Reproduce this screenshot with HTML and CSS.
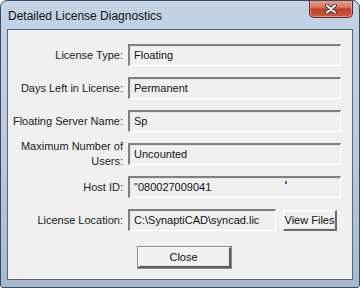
FILE: index.html
```html
<!DOCTYPE html>
<html lang="en">
<head>
    <meta charset="UTF-8">
    <title>Detailed License Diagnostics</title>
    <link rel="stylesheet" href="styles.css">
</head>
<body>

<div class="window">
    <div class="titlebar">
        <span class="title">Detailed License Diagnostics</span>
        <div class="close-x">
            <svg width="16" height="10" viewBox="0 0 16 10">
                <path d="M4 1.5 L12 8.5 M12 1.5 L4 8.5" stroke="#3a3a3a" stroke-width="4" stroke-linecap="round"/>
                <path d="M4 1.5 L12 8.5 M12 1.5 L4 8.5" stroke="#ffffff" stroke-width="2" stroke-linecap="round"/>
            </svg>
        </div>
    </div>

    <div class="client">
        <div class="form">
            <label class="label">License Type:</label>
            <div class="field">Floating</div>

            <label class="label">Days Left in License:</label>
            <div class="field">Permanent</div>

            <label class="label">Floating Server Name:</label>
            <div class="field">Sp</div>

            <label class="label two-line">Maximum Number of<br>Users:</label>
            <div class="field">Uncounted</div>

            <label class="label">Host ID:</label>
            <div class="field host">"080027009041<span class="mark"></span></div>

            <label class="label">License Location:</label>
            <div class="location">
                <div class="field">C:\SynaptiCAD\syncad.lic</div>
                <button class="btn view-btn">View Files</button>
            </div>
        </div>

        <div class="footer">
            <button class="btn close-btn">Close</button>
        </div>
    </div>
</div>

</body>
</html>
```

FILE: styles.css
```css
body {
    margin: 0;
    padding: 0;
    background-color: #ffffff;
    font-family: "Liberation Sans", Arial, sans-serif;
}

.window {
    width: 360px;
    height: 288px;
    box-sizing: border-box;
    border: 1px solid #3d4a5a;
    border-radius: 7px 7px 3px 3px;
    background: linear-gradient(to bottom, #c2d3e5 0%, #b6c8db 60%, #a4b9d0 100%);
    display: flex;
    flex-direction: column;
    overflow: hidden;
}

.titlebar {
    height: 28px;
    display: flex;
    align-items: flex-start;
    justify-content: space-between;
}

.title {
    font-size: 12px;
    color: #111;
    margin: 8px 0 0 7px;
}

.close-x {
    width: 44px;
    height: 18px;
    margin-right: 6px;
    margin-top: -1px;
    box-sizing: border-box;
    border: 1px solid #5b2a22;
    border-top: none;
    border-radius: 0 0 5px 5px;
    background: linear-gradient(to bottom, #e5a896 0%, #d97a60 40%, #c0412a 55%, #d0593f 100%);
    display: flex;
    align-items: center;
    justify-content: center;
    box-shadow: inset 0 0 0 1px rgba(255, 200, 180, 0.5);
}

.client {
    flex: 1;
    margin: 0 6px 7px 6px;
    border: 1px solid #54657a;
    background-color: #f0f0f0;
    display: flex;
    flex-direction: column;
}

.form {
    display: grid;
    grid-template-columns: 115px 1fr;
    grid-auto-rows: 22px;
    column-gap: 5px;
    row-gap: 11px;
    padding: 14px 11px 0 0;
    align-items: center;
}

.label {
    font-size: 11px;
    color: #1a1a1a;
    text-align: right;
    white-space: nowrap;
}

.two-line {
    line-height: 15px;
}

.field {
    height: 22px;
    box-sizing: border-box;
    border-top: 2px solid #7f7f7f;
    border-left: 2px solid #7f7f7f;
    border-right: 1px solid #ffffff;
    border-bottom: 1px solid #ffffff;
    box-shadow: 1px 1px 0 #e6e6e6 inset;
    padding: 3px 0 0 4px;
    font-size: 11px;
    color: #111;
    white-space: nowrap;
}

.host {
    position: relative;
}

.mark {
    position: absolute;
    left: 155px;
    top: 3px;
    width: 2px;
    height: 3px;
    background-color: #3b6fc4;
}

.location {
    display: flex;
    align-items: center;
    gap: 7px;
}

.location .field {
    width: 148px;
}

.btn {
    font-family: "Liberation Sans", Arial, sans-serif;
    font-size: 11px;
    color: #111;
    background-color: #f0f0f0;
    box-sizing: border-box;
    border-top: 1px solid #ffffff;
    border-left: 1px solid #ffffff;
    border-right: 2px solid #6a6a6a;
    border-bottom: 2px solid #6a6a6a;
    box-shadow: -1px -1px 0 #e3e3e3 inset;
    padding: 0;
    border-radius: 0;
    white-space: nowrap;
}

.view-btn {
    width: 54px;
    height: 21px;
}

.footer {
    display: flex;
    justify-content: center;
    padding-top: 16px;
}

.close-btn {
    width: 93px;
    height: 21px;
    border-right: 2px solid #5e5e5e;
    border-bottom: 2px solid #5e5e5e;
    outline: 1px solid #8a8a8a;
    margin-left: 8px;
}
```
